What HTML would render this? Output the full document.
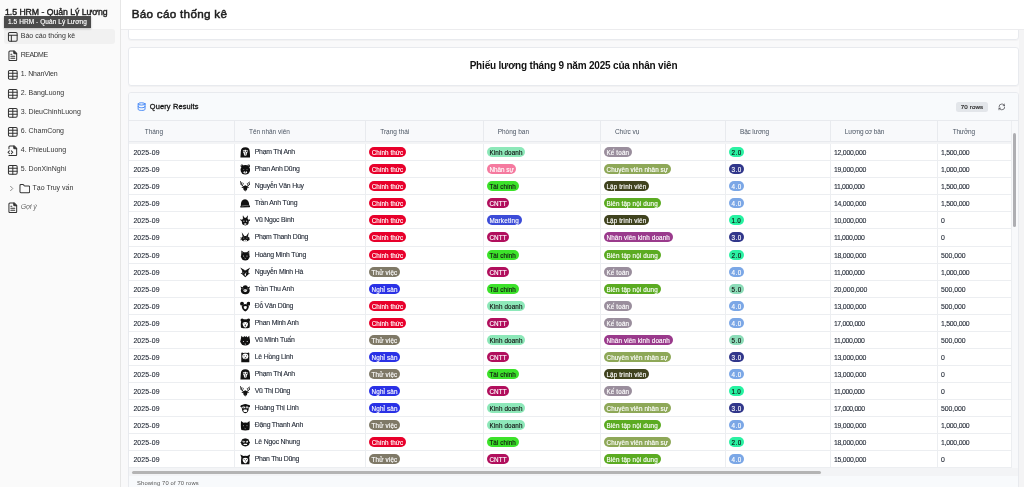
<!DOCTYPE html>
<html><head><meta charset="utf-8"><title>Báo cáo thống kê</title>
<style>
*{box-sizing:border-box;margin:0;padding:0}
html,body{width:1024px;height:487px;overflow:hidden;background:#f9f9fa;font-family:"Liberation Sans",sans-serif;color:#222}
#root{position:absolute;left:0;top:0;width:1024px;height:487px;overflow:hidden;will-change:transform}
#side{position:absolute;left:0;top:0;width:121px;height:487px;background:#fafafa;border-right:1px solid #e6e6e6}
#side .ttl{position:absolute;left:5px;top:6.7px;font-size:8.7px;line-height:10px;color:#222;white-space:nowrap;letter-spacing:-0.028px;-webkit-text-stroke:.4px #222}
#side .tip{position:absolute;left:4px;top:16px;width:87px;height:12px;background:#4b4b4b;color:#fff;font-size:6.5px;line-height:12px;padding-left:4px;white-space:nowrap;box-shadow:0 1px 2px rgba(0,0,0,.25);z-index:3;-webkit-text-stroke:.15px #fff;letter-spacing:0.074px}
.it{position:absolute;left:4px;width:111px;height:14.6px;border-radius:3px;font-size:7.0px;color:#333;white-space:nowrap}
.it.act{background:#f1f1f1}
.it .ic{position:absolute;left:2.8px;top:1.6px;width:11.6px;height:11.6px}
.it .ic.f{left:3.3px}
.it span{position:absolute;left:17px;top:-.8px;line-height:15px}
#hdr{position:absolute;left:121px;top:0;width:903px;height:30px;background:#fff;border-bottom:1px solid #ececee;z-index:5}
#hdr h1{position:absolute;left:10.7px;top:7.4px;font-size:11.7px;line-height:14px;font-weight:400;color:#1c1c1c;letter-spacing:0.284px;white-space:nowrap;-webkit-text-stroke:.5px #1c1c1c}
.card{position:absolute;left:128px;width:891px;background:#fff;border:1px solid #e8eaee;border-radius:3px;box-shadow:0 1px 1px rgba(0,0,0,.03)}
#c1{top:20px;height:20px}
#c2{top:47px;height:39px}
#c2 div{text-align:center;line-height:35.8px;font-size:10.0px;font-weight:700;color:#111;letter-spacing:-0.186px;white-space:nowrap}
#c3{top:92px;height:420px;background:#f8fafc;overflow:hidden}
#qh{position:absolute;left:0;top:0;width:100%;height:28px;border-bottom:1px solid #e8eaee;background:#f8fafc}
#qh .db{position:absolute;left:7.8px;top:9.2px;width:9.2px;height:9.2px}
#qh .t{position:absolute;left:20.8px;top:0;line-height:27.6px;font-size:7.4px;color:#151515;-webkit-text-stroke:.3px #151515;white-space:nowrap;letter-spacing:0.152px}
#qh .n{position:absolute;left:827px;top:9px;width:32px;height:10px;border-radius:2.5px;background:#e3e6ea;font-size:6.2px;line-height:9px;text-align:center;color:#222;-webkit-text-stroke:.15px #222;letter-spacing:0.105px;white-space:nowrap}
#qh .rf{position:absolute;left:868.6px;top:10.1px;width:7.8px;height:7.800px}
#tb{position:absolute;left:0;top:28px;width:882px;height:347px;overflow:hidden;background:#fff}
.th{position:absolute;top:0;left:0;height:21px;width:920px;background:#f8f9fb;border-bottom:1px solid #e8eaee}
.th div{position:absolute;top:0;height:20px;border-right:1px solid #e8eaee}
.th span{position:absolute;top:.9px;line-height:20px;font-size:6.5px;color:#4b5563;white-space:nowrap}
.gap{position:absolute;top:21px;left:0;width:920px;height:2px;background:#f3f4f6}
#rows{position:absolute;top:0;left:0;width:920px}
.tr{position:absolute;left:0;width:920px;border-bottom:1px solid #eceef1;background:#fff}
.td{position:absolute;top:0;height:100%;line-height:17.8px;font-size:6.9px;color:#1c2330;-webkit-text-stroke:.1px #1c2330;border-right:1px solid #eceef1;padding-left:4.4px;white-space:nowrap;overflow:hidden}
.td.num{padding-left:3.4px}
.td.c8{padding-left:2.9px}
.c1{left:0.00px;width:106.25px}.c2{left:106.25px;width:130.75px}.c3{left:237.00px;width:117.80px}.c4{left:354.80px;width:117.05px}.c5{left:471.85px;width:125.15px}.c6{left:597.00px;width:104.50px}.c7{left:701.50px;width:107.50px}.c8{left:809.00px;width:107.00px}
.td.c2 .av{position:absolute;left:4.6px;top:3.0px;width:10.6px;height:10.6px}
.td.c2 span{position:absolute;left:19.45px;top:-1px}
.bd{position:absolute;left:2.9px;top:3.3px;height:9.6px;line-height:11.4px;border-radius:5px;text-align:center;font-size:6.3px;white-space:nowrap;overflow:hidden;-webkit-text-stroke:.13px currentColor}
#hs{position:absolute;left:0;top:375px;width:890px;height:8px;background:#f3f4f6}
#hs i{position:absolute;left:3px;top:2.5px;width:689px;height:3px;border-radius:2px;background:#b4b4b4}
#vs{position:absolute;left:882px;top:28px;width:8px;height:347px;background:#f8f9fb;border-left:1px solid #eceef1}
#vs i{position:absolute;left:1px;top:12px;width:3px;height:94px;border-radius:2px;background:#aeaeb2}
#ft{position:absolute;left:0;top:383px;width:100%;height:40px;background:#f8fafc;font-size:5.8px;color:#555;padding:4.1px 0 0 8px;letter-spacing:0.15px;white-space:nowrap}
#ps{position:absolute;left:1019px;top:30px;width:5px;height:457px;background:#f4f4f5}
</style></head><body><div id="root">
<div id="side">
 <div class="ttl">1.5 HRM - Quản Lý Lương</div>
 <div class="tip">1.5 HRM - Quản Lý Lương</div>
 <div class="it act" style="top:29px"><svg class="ic" viewBox="0 0 24 24" fill="none" stroke="#333" stroke-width="2.1" stroke-linecap="round" stroke-linejoin="round"><rect x="3" y="3" width="18" height="18" rx="2.4"/><path d="M3 9h18M9 21V9"/></svg><span style="left:16.80px;letter-spacing:-0.007px">Báo cáo thống kê</span></div>
 <div class="it" style="top:48px"><svg class="ic f" viewBox="0 0 24 24" fill="none" stroke="#333" stroke-width="2.1" stroke-linecap="round" stroke-linejoin="round"><path d="M15 2H6a2 2 0 0 0-2 2v16a2 2 0 0 0 2 2h12a2 2 0 0 0 2-2V7Z"/><path d="M14 2v4a2 2 0 0 0 2 2h4" fill="#333"/><path d="M10 9H8M16 13H8M16 17H8"/></svg><span style="left:16.80px;letter-spacing:-0.531px">README</span></div>
 <div class="it" style="top:67px"><svg class="ic" viewBox="0 0 24 24" fill="none" stroke="#333" stroke-width="2.1" stroke-linecap="round" stroke-linejoin="round"><rect x="3" y="3" width="18" height="18" rx="2.4"/><path d="M3 9h18M3 15h18M12 3v18"/></svg><span style="left:16.80px;letter-spacing:-0.151px">1. NhanVien</span></div>
 <div class="it" style="top:86px"><svg class="ic" viewBox="0 0 24 24" fill="none" stroke="#333" stroke-width="2.1" stroke-linecap="round" stroke-linejoin="round"><rect x="3" y="3" width="18" height="18" rx="2.4"/><path d="M3 9h18M3 15h18M12 3v18"/></svg><span style="left:16.80px;letter-spacing:-0.019px">2. BangLuong</span></div>
 <div class="it" style="top:105px"><svg class="ic" viewBox="0 0 24 24" fill="none" stroke="#333" stroke-width="2.1" stroke-linecap="round" stroke-linejoin="round"><rect x="3" y="3" width="18" height="18" rx="2.4"/><path d="M3 9h18M3 15h18M12 3v18"/></svg><span style="left:16.80px;letter-spacing:0.004px">3. DieuChinhLuong</span></div>
 <div class="it" style="top:124px"><svg class="ic" viewBox="0 0 24 24" fill="none" stroke="#333" stroke-width="2.1" stroke-linecap="round" stroke-linejoin="round"><rect x="3" y="3" width="18" height="18" rx="2.4"/><path d="M3 9h18M3 15h18M12 3v18"/></svg><span style="left:16.80px;letter-spacing:-0.005px">6. ChamCong</span></div>
 <div class="it" style="top:143px"><svg class="ic f" viewBox="0 0 24 24" fill="none" stroke="#333" stroke-width="2.1" stroke-linecap="round" stroke-linejoin="round"><path d="M4 22h14a2 2 0 0 0 2-2V7l-5-5H6a2 2 0 0 0-2 2v4"/><path d="M14 2v4a2 2 0 0 0 2 2h4" fill="#333"/><path d="M5 12l-3 3 3 3M9 18l3-3-3-3"/></svg><span style="left:16.80px;letter-spacing:0.012px">4. PhieuLuong</span></div>
 <div class="it" style="top:162px"><svg class="ic" viewBox="0 0 24 24" fill="none" stroke="#333" stroke-width="2.1" stroke-linecap="round" stroke-linejoin="round"><rect x="3" y="3" width="18" height="18" rx="2.4"/><path d="M3 9h18M3 15h18M12 3v18"/></svg><span style="left:16.80px;letter-spacing:0.013px">5. DonXinNghi</span></div>
 <div class="it" style="top:181px"><svg style="position:absolute;left:5.2px;top:4.2px;width:5px;height:7px" viewBox="0 0 10 14" fill="none" stroke="#777" stroke-width="1.7"><path d="M2.500 2l5 5-5 5"/></svg><svg style="position:absolute;left:14.8px;top:1.5px;width:11.6px;height:11.6px" viewBox="0 0 24 24" fill="none" stroke="#333" stroke-width="2.1" stroke-linecap="round" stroke-linejoin="round"><path d="M20 20a2 2 0 0 0 2-2V8a2 2 0 0 0-2-2h-7.900a2 2 0 0 1-1.690-.9L9.600 3.900A2 2 0 0 0 7.930 3H4a2 2 0 0 0-2 2v13a2 2 0 0 0 2 2Z"/></svg><span style="left:28.55px;letter-spacing:-0.01px">Tạo Truy vấn</span></div>
 <div class="it" style="top:200px"><svg class="ic f" viewBox="0 0 24 24" fill="none" stroke="#333" stroke-width="2.1" stroke-linecap="round" stroke-linejoin="round"><path d="M15 2H6a2 2 0 0 0-2 2v16a2 2 0 0 0 2 2h12a2 2 0 0 0 2-2V7Z"/><path d="M14 2v4a2 2 0 0 0 2 2h4" fill="#333"/><path d="M10 9H8M16 13H8M16 17H8"/></svg><span style="left:16.80px;letter-spacing:-0.187px;font-style:italic;color:#6a6a6a">Gợi ý</span></div>
</div>
<div id="hdr"><h1>Báo cáo thống kê</h1></div>
<div class="card" id="c1"></div>
<div class="card" id="c2"><div>Phiếu lương tháng 9 năm 2025 của nhân viên</div></div>
<div class="card" id="c3">
 <div id="qh">
  <svg class="db" viewBox="0 0 24 24" fill="none" stroke="#3b82f6" stroke-width="2.4" stroke-linecap="round"><ellipse cx="12" cy="5" rx="9" ry="3"/><path d="M3 5v14c0 1.7 4 3 9 3s9-1.3 9-3V5"/><path d="M3 12c0 1.7 4 3 9 3s9-1.3 9-3"/></svg>
  <div class="t">Query Results</div>
  <div class="n">70 rows</div>
  <svg class="rf" viewBox="0 0 24 24" fill="none" stroke="#3f3f46" stroke-width="2.1" stroke-linecap="round" stroke-linejoin="round"><path d="M3 12a9 9 0 0 1 9-9 9.750 9.750 0 0 1 6.740 2.740L21 8"/><path d="M21 3v5h-5"/><path d="M21 12a9 9 0 0 1-9 9 9.750 9.750 0 0 1-6.740-2.740L3 16"/><path d="M8 16H3v5"/></svg>
 </div>
 <div id="tb">
  <div class="th"><div class="c1"><span style="left:15.70px;letter-spacing:-0.009px">Tháng</span></div><div class="c2"><span style="left:13.70px;letter-spacing:-0.025px">Tên nhân viên</span></div><div class="c3"><span style="left:14.20px;letter-spacing:0.013px">Trạng thái</span></div><div class="c4"><span style="left:13.90px;letter-spacing:-0.007px">Phòng ban</span></div><div class="c5"><span style="left:14.10px;letter-spacing:-0.032px">Chức vụ</span></div><div class="c6"><span style="left:13.95px;letter-spacing:-0.143px">Bậc lương</span></div><div class="c7"><span style="left:14.20px;letter-spacing:-0.163px">Lương cơ bản</span></div><div class="c8"><span style="left:14.70px;letter-spacing:-0.208px">Thưởng</span></div></div>
  <div class="gap"></div>
  <div id="rows">
<div class="tr" style="top:23px;height:17px"><div class="td c1" style="letter-spacing:0.134px">2025-09</div><div class="td c2"><svg class="av" viewBox="0 0 20 20" fill="#111"><path d="M.8 19.600 L1.600 8 Q2 .5 10 .5 Q18 .5 18.400 8 L19.200 19.600 Z"/><path d="M5.400 6.200 Q10 4 14.600 6.200 Q15 10 12.800 12.400 L12.400 15.600 Q10 17 7.600 15.600 L7.200 12.400 Q5 10 5.400 6.200Z" fill="#fff"/><ellipse cx="7.600" cy="8" rx="1.500" ry="1.200"/><ellipse cx="12.400" cy="8" rx="1.500" ry="1.200"/><path d="M8.600 10.400h2.800L10 13.400z"/><path d="M10 13v2.400" stroke="#111" stroke-width="1"/></svg><span style="letter-spacing:-0.243px">Phạm Thị Anh</span></div><div class="td c3"><span class="bd" style="background:#e8002b;color:#fff;width:37.1px;letter-spacing:0.036px">Chính thức</span></div><div class="td c4"><span class="bd" style="background:#8de8b9;color:#111;width:38.6px;letter-spacing:0.125px">Kinh doanh</span></div><div class="td c5"><span class="bd" style="background:#9a8e9d;color:#fff;width:28.2px;letter-spacing:0.147px">Kế toán</span></div><div class="td c6"><span class="bd" style="background:#2bf1a3;color:#111;width:15.3px;letter-spacing:0.467px">2.0</span></div><div class="td c7 num" style="letter-spacing:-0.222px">12,000,000</div><div class="td c8 num" style="letter-spacing:-0.232px">1,500,000</div></div>
<div class="tr" style="top:40px;height:17px"><div class="td c1" style="letter-spacing:0.134px">2025-09</div><div class="td c2"><svg class="av" viewBox="0 0 20 20" fill="#111"><circle cx="10" cy="11" r="9"/><circle cx="3.600" cy="3.600" r="2.500"/><circle cx="16.400" cy="3.600" r="2.500"/><circle cx="3.400" cy="3.200" r=".9" fill="#fff"/><circle cx="16.600" cy="3.200" r=".9" fill="#fff"/><ellipse cx="10" cy="15.400" rx="3.200" ry="2.400" fill="#fff"/><ellipse cx="10" cy="14.400" rx="1.500" ry="1"/><path d="M10 15v1.600" stroke="#111" stroke-width=".8"/><path d="M5.600 10.500h2.400M12 10.500h2.400" stroke="#fff" stroke-width=".6"/></svg><span style="letter-spacing:-0.265px">Phan Anh Dũng</span></div><div class="td c3"><span class="bd" style="background:#e8002b;color:#fff;width:37.1px;letter-spacing:0.036px">Chính thức</span></div><div class="td c4"><span class="bd" style="background:#f5799f;color:#fff;width:29.8px;letter-spacing:0.005px">Nhân sự</span></div><div class="td c5"><span class="bd" style="background:#8ea858;color:#fff;width:67.2px;letter-spacing:0.095px">Chuyên viên nhân sự</span></div><div class="td c6"><span class="bd" style="background:#31378b;color:#fff;width:15.4px;letter-spacing:0.517px">3.0</span></div><div class="td c7 num" style="letter-spacing:-0.222px">19,000,000</div><div class="td c8 num" style="letter-spacing:-0.232px">1,000,000</div></div>
<div class="tr" style="top:57px;height:17px"><div class="td c1" style="letter-spacing:0.134px">2025-09</div><div class="td c2"><svg class="av" viewBox="0 0 20 20" fill="#111"><path d="M10 20 L6.800 16.500 L5.600 10.500 L10 8 L14.400 10.500 L13.200 16.500 Z"/><path d="M6.400 10.500 L1.800 6.500 L.8 .6 M2.200 6.800 L3.600 2.600 M4.600 9 L6.200 4.400 M13.600 10.500 L18.200 6.500 L19.200 .6 M17.800 6.800 L16.400 2.600 M15.400 9 L13.800 4.400" stroke="#111" stroke-width="1.400" fill="none" stroke-linecap="round"/><path d="M6 11 L2.400 11.800 L6.200 13.600Z M14 11 L17.600 11.800 L13.800 13.600Z"/><path d="M8.600 17.500h2.800" stroke="#fff" stroke-width=".6"/></svg><span style="letter-spacing:-0.215px">Nguyễn Văn Huy</span></div><div class="td c3"><span class="bd" style="background:#e8002b;color:#fff;width:37.1px;letter-spacing:0.036px">Chính thức</span></div><div class="td c4"><span class="bd" style="background:#3ce22a;color:#111;width:32px;letter-spacing:0.062px">Tài chính</span></div><div class="td c5"><span class="bd" style="background:#40431f;color:#fff;width:45.4px;letter-spacing:0.125px">Lập trình viên</span></div><div class="td c6"><span class="bd" style="background:#7ba7e6;color:#fff;width:15.4px;letter-spacing:0.517px">4.0</span></div><div class="td c7 num" style="letter-spacing:-0.332px">11,000,000</div><div class="td c8 num" style="letter-spacing:-0.232px">1,500,000</div></div>
<div class="tr" style="top:74px;height:17px"><div class="td c1" style="letter-spacing:0.134px">2025-09</div><div class="td c2"><svg class="av" viewBox="0 0 20 20" fill="#111"><path d="M1.5 15 Q1 3 9.5 2.5 Q17 3 17.5 14 Z"/><path d="M.5 15.500 Q9 12.5 17 13.5 L20 15 Q20 17.5 17 17.5 L2 18 Q0 18 .5 15.5Z"/><path d="M3 15.400 Q9 13.600 16 14.600" stroke="#fff" stroke-width=".7" fill="none"/></svg><span style="letter-spacing:-0.2px">Trần Anh Tùng</span></div><div class="td c3"><span class="bd" style="background:#e8002b;color:#fff;width:37.1px;letter-spacing:0.036px">Chính thức</span></div><div class="td c4"><span class="bd" style="background:#b10f5d;color:#fff;width:22.8px;letter-spacing:0.134px">CNTT</span></div><div class="td c5"><span class="bd" style="background:#5bab22;color:#fff;width:56.8px;letter-spacing:0.136px">Biên tập nội dung</span></div><div class="td c6"><span class="bd" style="background:#7ba7e6;color:#fff;width:15.4px;letter-spacing:0.517px">4.0</span></div><div class="td c7 num" style="letter-spacing:-0.222px">14,000,000</div><div class="td c8 num" style="letter-spacing:-0.232px">1,500,000</div></div>
<div class="tr" style="top:91px;height:17px"><div class="td c1" style="letter-spacing:0.134px">2025-09</div><div class="td c2"><svg class="av" viewBox="0 0 20 20" fill="#111"><ellipse cx="10" cy="12.5" rx="6.6" ry="7.3"/><path d="M4.5 9.5 L.2 7.6 Q.6 11.4 4 11.6 Z M15.5 9.5 L19.8 7.6 Q19.4 11.4 16 11.6 Z"/><path d="M6.4 7 Q4.2 4 5.6 .6 Q7 3.500 9 5.5 Z M13.6 7 Q15.800 4 14.4 .6 Q13 3.5 11 5.5 Z"/><circle cx="7.4" cy="11.6" r="1" fill="#fff"/><circle cx="12.6" cy="11.6" r="1" fill="#fff"/><ellipse cx="10" cy="17" rx="2.4" ry="1.3" fill="#fff"/></svg><span style="letter-spacing:-0.266px">Vũ Ngọc Bình</span></div><div class="td c3"><span class="bd" style="background:#e8002b;color:#fff;width:37.1px;letter-spacing:0.036px">Chính thức</span></div><div class="td c4"><span class="bd" style="background:#3c4cd8;color:#fff;width:34.9px;letter-spacing:0.205px">Marketing</span></div><div class="td c5"><span class="bd" style="background:#40431f;color:#fff;width:45.4px;letter-spacing:0.125px">Lập trình viên</span></div><div class="td c6"><span class="bd" style="background:#27f3a2;color:#111;width:14.65px;letter-spacing:0.142px">1.0</span></div><div class="td c7 num" style="letter-spacing:-0.222px">10,000,000</div><div class="td c8 num" style="letter-spacing:0px">0</div></div>
<div class="tr" style="top:108px;height:18px"><div class="td c1" style="letter-spacing:0.134px">2025-09</div><div class="td c2"><svg class="av" viewBox="0 0 20 20" fill="#111"><ellipse cx="10" cy="12.6" rx="7.4" ry="5.2"/><path d="M5.200 9.5 L3.200 .6 L8.6 8 Z M14.8 9.5 L16.8 .6 L11.4 8 Z"/><path d="M.4 11 L5 12.400 M.4 14.8 L5 13.600 M19.6 11 L15 12.4 M19.6 14.8 L15 13.6" stroke="#111" stroke-width="1.1"/><ellipse cx="10" cy="16.4" rx="3.4" ry="2" fill="#fff"/><ellipse cx="10" cy="15.400" rx="1" ry=".7"/><path d="M5.6 11.6h2.600M11.8 11.6h2.600" stroke="#fff" stroke-width=".8"/></svg><span style="letter-spacing:-0.287px">Phạm Thanh Dũng</span></div><div class="td c3"><span class="bd" style="background:#e8002b;color:#fff;width:37.1px;letter-spacing:0.036px">Chính thức</span></div><div class="td c4"><span class="bd" style="background:#b10f5d;color:#fff;width:22.8px;letter-spacing:0.134px">CNTT</span></div><div class="td c5"><span class="bd" style="background:#9a3a8c;color:#fff;width:68.9px;letter-spacing:0.125px">Nhân viên kinh doanh</span></div><div class="td c6"><span class="bd" style="background:#31378b;color:#fff;width:15.4px;letter-spacing:0.517px">3.0</span></div><div class="td c7 num" style="letter-spacing:-0.332px">11,000,000</div><div class="td c8 num" style="letter-spacing:0px">0</div></div>
<div class="tr" style="top:126px;height:17px"><div class="td c1" style="letter-spacing:0.134px">2025-09</div><div class="td c2"><svg class="av" viewBox="0 0 20 20" fill="#111"><ellipse cx="10" cy="12" rx="8.2" ry="7.6"/><path d="M2.4 9.500 L2.600 1 L9 5.5 Z M17.6 9.5 L17.4 1 L11 5.5 Z"/><circle cx="6.8" cy="11.4" r="1" fill="#fff"/><circle cx="13.2" cy="11.4" r="1" fill="#fff"/><path d="M8.400 15 L10 16.2 L11.6 15" stroke="#fff" stroke-width=".9" fill="none"/><path d="M4.2 3.500L4.400 6.5 M15.8 3.5L15.6 6.5" stroke="#fff" stroke-width=".6"/></svg><span style="letter-spacing:-0.218px">Hoàng Minh Tùng</span></div><div class="td c3"><span class="bd" style="background:#e8002b;color:#fff;width:37.1px;letter-spacing:0.036px">Chính thức</span></div><div class="td c4"><span class="bd" style="background:#3ce22a;color:#111;width:32px;letter-spacing:0.062px">Tài chính</span></div><div class="td c5"><span class="bd" style="background:#5bab22;color:#fff;width:56.8px;letter-spacing:0.136px">Biên tập nội dung</span></div><div class="td c6"><span class="bd" style="background:#2bf1a3;color:#111;width:15.3px;letter-spacing:0.467px">2.0</span></div><div class="td c7 num" style="letter-spacing:-0.222px">18,000,000</div><div class="td c8 num" style="letter-spacing:-0.037px">500,000</div></div>
<div class="tr" style="top:143px;height:17px"><div class="td c1" style="letter-spacing:0.134px">2025-09</div><div class="td c2"><svg class="av" viewBox="0 0 20 20" fill="#111"><path d="M10 19.500 L4.400 14 L4 8 L10 6 L16 8 L15.6 14 Z"/><path d="M5.500 9.5 L.4 .8 L9.400 6.200 Z M14.5 9.5 L19.6 .8 L10.600 6.2 Z"/><path d="M4.2 11 L1.2 11.8 L4.6 14.200Z M15.8 11 L18.800 11.8 L15.4 14.2Z"/><path d="M10 10.500 L11.4 14.500 L10 17.500 L8.600 14.5Z" fill="#fff"/><circle cx="7.2" cy="11" r=".7" fill="#fff"/><circle cx="12.8" cy="11" r=".7" fill="#fff"/></svg><span style="letter-spacing:-0.21px">Nguyễn Minh Hà</span></div><div class="td c3"><span class="bd" style="background:#7f7967;color:#fff;width:31.25px;letter-spacing:0.162px">Thử việc</span></div><div class="td c4"><span class="bd" style="background:#b10f5d;color:#fff;width:22.8px;letter-spacing:0.134px">CNTT</span></div><div class="td c5"><span class="bd" style="background:#9a8e9d;color:#fff;width:28.2px;letter-spacing:0.147px">Kế toán</span></div><div class="td c6"><span class="bd" style="background:#7ba7e6;color:#fff;width:15.4px;letter-spacing:0.517px">4.0</span></div><div class="td c7 num" style="letter-spacing:-0.332px">11,000,000</div><div class="td c8 num" style="letter-spacing:-0.232px">1,000,000</div></div>
<div class="tr" style="top:160px;height:17px"><div class="td c1" style="letter-spacing:0.134px">2025-09</div><div class="td c2"><svg class="av" viewBox="0 0 20 20" fill="#111"><ellipse cx="10" cy="12.5" rx="8.400" ry="6.8"/><path d="M3.6 10 L.6 4.600 L8 7 Z M16.4 10 L19.4 4.6 L12 7 Z"/><ellipse cx="10" cy="5.4" rx="4.4" ry="3"/><ellipse cx="10" cy="12.4" rx="3.4" ry="2.600" fill="#fff"/><circle cx="8.8" cy="12.4" r=".75"/><circle cx="11.2" cy="12.4" r=".75"/><path d="M4 9.200h3M13 9.2h3" stroke="#fff" stroke-width=".7"/></svg><span style="letter-spacing:-0.189px">Trần Thu Anh</span></div><div class="td c3"><span class="bd" style="background:#2a31e6;color:#fff;width:31.5px;letter-spacing:0.149px">Nghỉ sản</span></div><div class="td c4"><span class="bd" style="background:#3ce22a;color:#111;width:32px;letter-spacing:0.062px">Tài chính</span></div><div class="td c5"><span class="bd" style="background:#5bab22;color:#fff;width:56.8px;letter-spacing:0.136px">Biên tập nội dung</span></div><div class="td c6"><span class="bd" style="background:#8cdcb8;color:#111;width:15.3px;letter-spacing:0.467px">5.0</span></div><div class="td c7 num" style="letter-spacing:-0.122px">20,000,000</div><div class="td c8 num" style="letter-spacing:-0.037px">500,000</div></div>
<div class="tr" style="top:177px;height:17px"><div class="td c1" style="letter-spacing:0.134px">2025-09</div><div class="td c2"><svg class="av" viewBox="0 0 20 20" fill="#111"><path d="M10 19.600 Q3.400 17 3.200 9 Q10 3 16.800 9 Q16.600 17 10 19.600Z"/><circle cx="3.800" cy="5" r="3.700"/><circle cx="16.200" cy="5" r="3.700"/><path d="M10 16.400 Q6.600 14.400 6.800 10.600 Q10 8.200 13.200 10.600 Q13.400 14.400 10 16.400Z" fill="#fff"/><ellipse cx="10" cy="17" rx="2.200" ry="1.400"/><path d="M5.600 9 Q10 5.500 14.400 9" stroke="#111" stroke-width="2" fill="none"/></svg><span style="letter-spacing:-0.268px">Đỗ Văn Dũng</span></div><div class="td c3"><span class="bd" style="background:#e8002b;color:#fff;width:37.1px;letter-spacing:0.036px">Chính thức</span></div><div class="td c4"><span class="bd" style="background:#8de8b9;color:#111;width:38.6px;letter-spacing:0.125px">Kinh doanh</span></div><div class="td c5"><span class="bd" style="background:#9a8e9d;color:#fff;width:28.2px;letter-spacing:0.147px">Kế toán</span></div><div class="td c6"><span class="bd" style="background:#7ba7e6;color:#fff;width:15.4px;letter-spacing:0.517px">4.0</span></div><div class="td c7 num" style="letter-spacing:-0.222px">13,000,000</div><div class="td c8 num" style="letter-spacing:-0.037px">500,000</div></div>
<div class="tr" style="top:194px;height:17px"><div class="td c1" style="letter-spacing:0.134px">2025-09</div><div class="td c2"><svg class="av" viewBox="0 0 20 20" fill="#111"><path d="M2 18.500 Q.8 12 2.400 5 L17.600 5 Q19.200 12 18 18.5 Q10 20.500 2 18.5Z"/><circle cx="4" cy="3.800" r="3"/><circle cx="16" cy="3.8" r="3"/><rect x="3" y="2.500" width="14" height="4"/><path d="M10 18.500 Q4.500 16 5 9.500 Q10 6 15 9.5 Q15.5 16 10 18.5Z" fill="#fff"/><ellipse cx="10" cy="13.500" rx="1.400" ry="1"/><circle cx="7.600" cy="10.800" r=".7"/><circle cx="12.400" cy="10.8" r=".7"/><path d="M10 14.500v2" stroke="#111" stroke-width=".8"/></svg><span style="letter-spacing:-0.213px">Phan Minh Anh</span></div><div class="td c3"><span class="bd" style="background:#e8002b;color:#fff;width:37.1px;letter-spacing:0.036px">Chính thức</span></div><div class="td c4"><span class="bd" style="background:#b10f5d;color:#fff;width:22.8px;letter-spacing:0.134px">CNTT</span></div><div class="td c5"><span class="bd" style="background:#9a8e9d;color:#fff;width:28.2px;letter-spacing:0.147px">Kế toán</span></div><div class="td c6"><span class="bd" style="background:#7ba7e6;color:#fff;width:15.4px;letter-spacing:0.517px">4.0</span></div><div class="td c7 num" style="letter-spacing:-0.356px">17,000,000</div><div class="td c8 num" style="letter-spacing:-0.232px">1,500,000</div></div>
<div class="tr" style="top:211px;height:17px"><div class="td c1" style="letter-spacing:0.134px">2025-09</div><div class="td c2"><svg class="av" viewBox="0 0 20 20" fill="#111"><ellipse cx="10" cy="12" rx="9.400" ry="7.600"/><path d="M1.400 9 L2.600 1.500 L6 4.500 L8 1.800 L10 4 L12 1.8 L14 4.5 L17.400 1.5 L18.600 9 Z"/><circle cx="6.400" cy="12.400" r="1" fill="#fff"/><circle cx="13.600" cy="12.4" r="1" fill="#fff"/><path d="M8.400 16.500 L11.600 16.5 L10 18.400 Z" fill="#fff"/></svg><span style="letter-spacing:-0.221px">Vũ Minh Tuấn</span></div><div class="td c3"><span class="bd" style="background:#7f7967;color:#fff;width:31.25px;letter-spacing:0.162px">Thử việc</span></div><div class="td c4"><span class="bd" style="background:#8de8b9;color:#111;width:38.6px;letter-spacing:0.125px">Kinh doanh</span></div><div class="td c5"><span class="bd" style="background:#9a3a8c;color:#fff;width:68.9px;letter-spacing:0.125px">Nhân viên kinh doanh</span></div><div class="td c6"><span class="bd" style="background:#8cdcb8;color:#111;width:15.3px;letter-spacing:0.467px">5.0</span></div><div class="td c7 num" style="letter-spacing:-0.332px">11,000,000</div><div class="td c8 num" style="letter-spacing:-0.037px">500,000</div></div>
<div class="tr" style="top:228px;height:17px"><div class="td c1" style="letter-spacing:0.134px">2025-09</div><div class="td c2"><svg class="av" viewBox="0 0 20 20" fill="#111"><path d="M2.400 19.500 L2.400 2 Q3.500 .4 6 1.800 Q10 .6 14 1.800 Q16.500 .4 17.600 2 L17.600 19.5 Z"/><ellipse cx="10" cy="8.200" rx="5.600" ry="5.400" fill="#fff"/><circle cx="7.600" cy="7" r="1"/><circle cx="12.400" cy="7" r="1"/><path d="M8.800 9.500h2.400L10 11.600z"/><path d="M7 11.500 Q10 14 13 11.500" stroke="#111" stroke-width=".7" fill="none"/></svg><span style="letter-spacing:-0.209px">Lê Hồng Linh</span></div><div class="td c3"><span class="bd" style="background:#2a31e6;color:#fff;width:31.5px;letter-spacing:0.149px">Nghỉ sản</span></div><div class="td c4"><span class="bd" style="background:#b10f5d;color:#fff;width:22.8px;letter-spacing:0.134px">CNTT</span></div><div class="td c5"><span class="bd" style="background:#8ea858;color:#fff;width:67.2px;letter-spacing:0.095px">Chuyên viên nhân sự</span></div><div class="td c6"><span class="bd" style="background:#31378b;color:#fff;width:15.4px;letter-spacing:0.517px">3.0</span></div><div class="td c7 num" style="letter-spacing:-0.222px">13,000,000</div><div class="td c8 num" style="letter-spacing:0px">0</div></div>
<div class="tr" style="top:245px;height:17px"><div class="td c1" style="letter-spacing:0.134px">2025-09</div><div class="td c2"><svg class="av" viewBox="0 0 20 20" fill="#111"><path d="M.8 19.600 L1.600 8 Q2 .5 10 .5 Q18 .5 18.400 8 L19.200 19.600 Z"/><path d="M5.400 6.200 Q10 4 14.600 6.200 Q15 10 12.800 12.400 L12.400 15.600 Q10 17 7.600 15.600 L7.200 12.400 Q5 10 5.400 6.200Z" fill="#fff"/><ellipse cx="7.600" cy="8" rx="1.500" ry="1.200"/><ellipse cx="12.400" cy="8" rx="1.500" ry="1.200"/><path d="M8.600 10.400h2.800L10 13.400z"/><path d="M10 13v2.400" stroke="#111" stroke-width="1"/></svg><span style="letter-spacing:-0.243px">Phạm Thị Anh</span></div><div class="td c3"><span class="bd" style="background:#7f7967;color:#fff;width:31.25px;letter-spacing:0.162px">Thử việc</span></div><div class="td c4"><span class="bd" style="background:#3ce22a;color:#111;width:32px;letter-spacing:0.062px">Tài chính</span></div><div class="td c5"><span class="bd" style="background:#40431f;color:#fff;width:45.4px;letter-spacing:0.125px">Lập trình viên</span></div><div class="td c6"><span class="bd" style="background:#7ba7e6;color:#fff;width:15.4px;letter-spacing:0.517px">4.0</span></div><div class="td c7 num" style="letter-spacing:-0.222px">13,000,000</div><div class="td c8 num" style="letter-spacing:0px">0</div></div>
<div class="tr" style="top:262px;height:17px"><div class="td c1" style="letter-spacing:0.134px">2025-09</div><div class="td c2"><svg class="av" viewBox="0 0 20 20" fill="#111"><path d="M10 20 L6.800 16.500 L5.600 10.500 L10 8 L14.400 10.500 L13.200 16.500 Z"/><path d="M6.400 10.500 L1.800 6.500 L.8 .6 M2.200 6.800 L3.600 2.600 M4.600 9 L6.200 4.400 M13.600 10.500 L18.200 6.500 L19.200 .6 M17.800 6.800 L16.400 2.600 M15.400 9 L13.800 4.400" stroke="#111" stroke-width="1.400" fill="none" stroke-linecap="round"/><path d="M6 11 L2.400 11.800 L6.200 13.600Z M14 11 L17.600 11.800 L13.800 13.600Z"/><path d="M8.600 17.500h2.800" stroke="#fff" stroke-width=".6"/></svg><span style="letter-spacing:-0.249px">Vũ Thị Dũng</span></div><div class="td c3"><span class="bd" style="background:#2a31e6;color:#fff;width:31.5px;letter-spacing:0.149px">Nghỉ sản</span></div><div class="td c4"><span class="bd" style="background:#b10f5d;color:#fff;width:22.8px;letter-spacing:0.134px">CNTT</span></div><div class="td c5"><span class="bd" style="background:#9a8e9d;color:#fff;width:28.2px;letter-spacing:0.147px">Kế toán</span></div><div class="td c6"><span class="bd" style="background:#27f3a2;color:#111;width:14.65px;letter-spacing:0.142px">1.0</span></div><div class="td c7 num" style="letter-spacing:-0.332px">11,000,000</div><div class="td c8 num" style="letter-spacing:0px">0</div></div>
<div class="tr" style="top:279px;height:17px"><div class="td c1" style="letter-spacing:0.134px">2025-09</div><div class="td c2"><svg class="av" viewBox="0 0 20 20" fill="#111"><path d="M10 19.500 Q4 18.500 3.600 11 L3.400 6 L16.600 6 L16.400 11 Q16 18.500 10 19.5Z"/><path d="M.4 6.500 Q1 3.500 5 3.400 Q10 .6 15 3.400 Q19 3.500 19.600 6.500 L17 8.500 L3 8.5 Z"/><rect x="4.200" y="6.400" width="5.200" height="3.600" rx="1.600" fill="#fff"/><rect x="10.600" y="6.400" width="5.200" height="3.600" rx="1.600" fill="#fff"/><circle cx="6.800" cy="8.200" r=".9"/><circle cx="13.200" cy="8.200" r=".9"/><rect x="6.600" y="12.400" width="6.800" height="4.600" rx="1.400" fill="#fff"/></svg><span style="letter-spacing:-0.185px">Hoàng Thị Linh</span></div><div class="td c3"><span class="bd" style="background:#2a31e6;color:#fff;width:31.5px;letter-spacing:0.149px">Nghỉ sản</span></div><div class="td c4"><span class="bd" style="background:#8de8b9;color:#111;width:38.6px;letter-spacing:0.125px">Kinh doanh</span></div><div class="td c5"><span class="bd" style="background:#8ea858;color:#fff;width:67.2px;letter-spacing:0.095px">Chuyên viên nhân sự</span></div><div class="td c6"><span class="bd" style="background:#31378b;color:#fff;width:15.4px;letter-spacing:0.517px">3.0</span></div><div class="td c7 num" style="letter-spacing:-0.356px">17,000,000</div><div class="td c8 num" style="letter-spacing:-0.037px">500,000</div></div>
<div class="tr" style="top:296px;height:17px"><div class="td c1" style="letter-spacing:0.134px">2025-09</div><div class="td c2"><svg class="av" viewBox="0 0 20 20" fill="#111"><path d="M2.600 19 Q1 13 2 2 L6.500 5 Q10 4 13.500 5 L18 2 Q19 13 17.400 19 Q10 20.500 2.600 19Z"/><circle cx="6.800" cy="11" r=".9" fill="#fff"/><circle cx="13.200" cy="11" r=".9" fill="#fff"/><path d="M8.500 15.500 L10 16.500 L11.500 15.500" stroke="#fff" stroke-width=".7" fill="none"/></svg><span style="letter-spacing:-0.231px">Đặng Thanh Anh</span></div><div class="td c3"><span class="bd" style="background:#7f7967;color:#fff;width:31.25px;letter-spacing:0.162px">Thử việc</span></div><div class="td c4"><span class="bd" style="background:#8de8b9;color:#111;width:38.6px;letter-spacing:0.125px">Kinh doanh</span></div><div class="td c5"><span class="bd" style="background:#5bab22;color:#fff;width:56.8px;letter-spacing:0.136px">Biên tập nội dung</span></div><div class="td c6"><span class="bd" style="background:#7ba7e6;color:#fff;width:15.4px;letter-spacing:0.517px">4.0</span></div><div class="td c7 num" style="letter-spacing:-0.222px">19,000,000</div><div class="td c8 num" style="letter-spacing:-0.232px">1,000,000</div></div>
<div class="tr" style="top:313px;height:17px"><div class="td c1" style="letter-spacing:0.134px">2025-09</div><div class="td c2"><svg class="av" viewBox="0 0 20 20" fill="#111"><ellipse cx="10" cy="10.500" rx="8" ry="7.200"/><path d="M0 10.500 L3 9.500 L3 12 Z M20 10.500 L17 9.500 L17 12 Z"/><path d="M3.500 5 Q10 .5 16.500 5 L16 7 L4 7 Z"/><path d="M4.500 7.200 L9 7.600 L8.600 10.500 L5.500 10.200 Z M15.500 7.200 L11 7.600 L11.400 10.500 L14.500 10.200 Z" fill="#fff"/><circle cx="7.200" cy="9" r=".8"/><circle cx="12.800" cy="9" r=".8"/><rect x="6.500" y="12.600" width="7" height="2.600" rx="1.200" fill="#fff"/></svg><span style="letter-spacing:-0.208px">Lê Ngọc Nhung</span></div><div class="td c3"><span class="bd" style="background:#e8002b;color:#fff;width:37.1px;letter-spacing:0.036px">Chính thức</span></div><div class="td c4"><span class="bd" style="background:#3ce22a;color:#111;width:32px;letter-spacing:0.062px">Tài chính</span></div><div class="td c5"><span class="bd" style="background:#8ea858;color:#fff;width:67.2px;letter-spacing:0.095px">Chuyên viên nhân sự</span></div><div class="td c6"><span class="bd" style="background:#2bf1a3;color:#111;width:15.3px;letter-spacing:0.467px">2.0</span></div><div class="td c7 num" style="letter-spacing:-0.222px">18,000,000</div><div class="td c8 num" style="letter-spacing:-0.232px">1,000,000</div></div>
<div class="tr" style="top:330px;height:17px"><div class="td c1" style="letter-spacing:0.134px">2025-09</div><div class="td c2"><svg class="av" viewBox="0 0 20 20" fill="#111"><path d="M2.400 19.500 Q1.400 12 2.600 6.500 L.6 .8 L6.500 3.600 Q10 2.600 13.500 3.600 L19.400 .8 L17.400 6.500 Q18.600 12 17.600 19.500 Z"/><path d="M10 18 Q4.600 16 5 9 Q10 5.500 15 9 Q15.400 16 10 18Z" fill="#fff"/><ellipse cx="7.800" cy="10.400" rx="1.100" ry=".9"/><ellipse cx="12.200" cy="10.400" rx="1.100" ry=".9"/><path d="M9 12.500h2L10 15z"/></svg><span style="letter-spacing:-0.288px">Phan Thu Dũng</span></div><div class="td c3"><span class="bd" style="background:#7f7967;color:#fff;width:31.25px;letter-spacing:0.162px">Thử việc</span></div><div class="td c4"><span class="bd" style="background:#b10f5d;color:#fff;width:22.8px;letter-spacing:0.134px">CNTT</span></div><div class="td c5"><span class="bd" style="background:#5bab22;color:#fff;width:56.8px;letter-spacing:0.136px">Biên tập nội dung</span></div><div class="td c6"><span class="bd" style="background:#7ba7e6;color:#fff;width:15.4px;letter-spacing:0.517px">4.0</span></div><div class="td c7 num" style="letter-spacing:-0.222px">15,000,000</div><div class="td c8 num" style="letter-spacing:0px">0</div></div>
  </div>
 </div>
 <div id="hs"><i></i></div>
 <div id="vs"><i></i></div>
 <div id="ft">Showing 70 of 70 rows</div>
</div>
<div id="ps"></div>
</div></body></html>
